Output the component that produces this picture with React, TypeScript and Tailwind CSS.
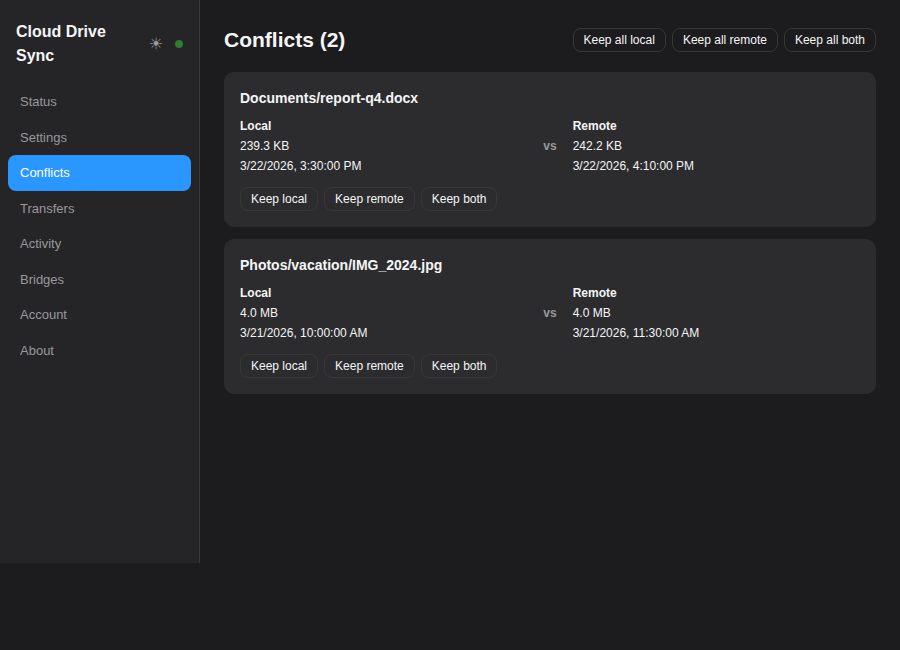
const font = { fontFamily: '"Liberation Sans", Arial, sans-serif' };

const nav = ["Status", "Settings", "Conflicts", "Transfers", "Activity", "Bridges", "Account", "About"];

const conflicts = [
  {
    path: "Documents/report-q4.docx",
    local: ["239.3 KB", "3/22/2026, 3:30:00 PM"],
    remote: ["242.2 KB", "3/22/2026, 4:10:00 PM"],
  },
  {
    path: "Photos/vacation/IMG_2024.jpg",
    local: ["4.0 MB", "3/21/2026, 10:00:00 AM"],
    remote: ["4.0 MB", "3/21/2026, 11:30:00 AM"],
  },
];

function Btn({ label }: { label: string }) {
  return (
    <button className="h-6 px-[10px] rounded-lg border border-[#38383a] bg-transparent text-xs leading-[14px] text-[#f5f5f7] whitespace-nowrap">
      {label}
    </button>
  );
}

function Side({ title, lines }: { title: string; lines: string[] }) {
  return (
    <div className="flex-1 text-xs leading-5 text-[#f5f5f7]">
      <div className="font-bold">{title}</div>
      {lines.map((l) => (
        <div key={l}>{l}</div>
      ))}
    </div>
  );
}

export default function App() {
  return (
    <div className="min-h-[650px] bg-[#1c1c1e] text-[#f5f5f7]" style={font}>
      <div className="flex h-[563px]">
        <aside className="w-[200px] shrink-0 bg-[#252527] border-r border-[#3a3a3c] px-2 pt-5">
          <div className="flex items-center pl-2 pr-2 mb-4">
            <h1 className="w-[110px] mr-auto text-base leading-6 font-bold">Cloud Drive Sync</h1>
            <span className="text-base leading-[18px] text-[#98989d] mr-3" style={{ fontFamily: '"DejaVu Sans", sans-serif' }}>☀</span>
            <span className="w-2 h-2 rounded-full bg-[#2e7d32]" />
          </div>
          <nav className="flex flex-col">
            {nav.map((n) => (
              <div
                key={n}
                className={
                  n === "Conflicts"
                    ? "h-[35.5px] flex items-center px-3 rounded-lg bg-[#2997ff] text-white text-[13px]"
                    : "h-[35.5px] flex items-center px-3 rounded-lg text-[#98989d] text-[13px]"
                }
              >
                {n}
              </div>
            ))}
          </nav>
        </aside>
        <main className="flex-1 px-6 pt-6">
          <div className="flex items-center justify-between mb-4">
            <h2 className="text-[21px] leading-8 font-bold">Conflicts (2)</h2>
            <div className="flex gap-[6px]">
              <Btn label="Keep all local" />
              <Btn label="Keep all remote" />
              <Btn label="Keep all both" />
            </div>
          </div>
          <div className="flex flex-col gap-3">
            {conflicts.map((c) => (
              <section key={c.path} className="bg-[#2c2c2e] rounded-[10px] p-4">
                <h3 className="text-sm leading-5 font-bold mb-2">{c.path}</h3>
                <div className="flex items-center gap-4">
                  <Side title="Local" lines={c.local} />
                  <span className="text-xs font-bold text-[#98989d]">vs</span>
                  <Side title="Remote" lines={c.remote} />
                </div>
                <div className="flex gap-[6px] mt-[11px]">
                  <Btn label="Keep local" />
                  <Btn label="Keep remote" />
                  <Btn label="Keep both" />
                </div>
              </section>
            ))}
          </div>
        </main>
      </div>
    </div>
  );
}
